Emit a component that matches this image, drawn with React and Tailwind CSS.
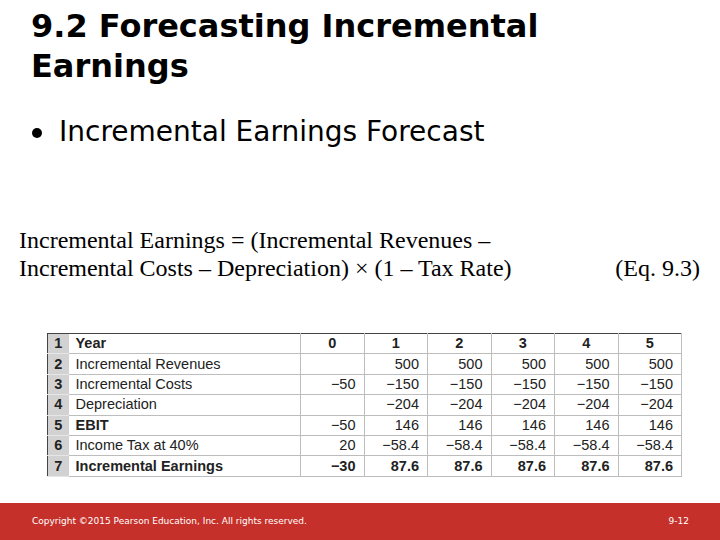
import React from 'react';

const rows = [
  { n: 1, label: 'Year', vals: ['0', '1', '2', '3', '4', '5'], bold: true },
  { n: 2, label: 'Incremental Revenues', vals: ['', '500', '500', '500', '500', '500'] },
  { n: 3, label: 'Incremental Costs', vals: ['\u221250', '\u2212150', '\u2212150', '\u2212150', '\u2212150', '\u2212150'] },
  { n: 4, label: 'Depreciation', vals: ['', '\u2212204', '\u2212204', '\u2212204', '\u2212204', '\u2212204'] },
  { n: 5, label: 'EBIT', vals: ['\u221250', '146', '146', '146', '146', '146'], boldLabel: true },
  { n: 6, label: 'Income Tax at 40%', vals: ['20', '\u221258.4', '\u221258.4', '\u221258.4', '\u221258.4', '\u221258.4'] },
  { n: 7, label: 'Incremental Earnings', vals: ['\u221230', '87.6', '87.6', '87.6', '87.6', '87.6'], bold: true },
];

export default function App() {
  return (
    <div className="w-[720px] h-[540px] bg-white flex flex-col overflow-hidden">
      <div className="flex-1 flex flex-col">
        <h1 className="pl-[31px] pt-[6px] text-[32px] leading-[40px] font-bold text-black font-['DejaVu_Sans',sans-serif]">
          9.2 Forecasting Incremental
          <br />
          Earnings
        </h1>
        <div className="pl-[32px] mt-[29px] flex items-center h-[34px] text-[28px] leading-[34px] text-black font-['DejaVu_Sans',sans-serif]">
          <span className="w-[10px] h-[10px] rounded-full bg-black mr-[17px] mt-[2px]" />
          <span>Incremental Earnings Forecast</span>
        </div>

        <div className="mt-[77px] pl-[19px] pr-[20px] flex items-end justify-between font-['Liberation_Serif',serif] text-[24px] leading-[28px] text-black">
          <div>
            <div>Incremental Earnings = (Incremental Revenues –</div>
            <div>Incremental Costs – Depreciation) × (1 – Tax Rate)</div>
          </div>
          <div>(Eq. 9.3)</div>
        </div>

        <div className="mt-[51px] pl-[47px]">
          <table className="border-collapse border border-[#444] font-['Liberation_Sans',Arial,sans-serif] text-[14.5px] text-[#222]">
            <tbody>
              {rows.map((r) => (
                <tr key={r.n} className="h-[20.4px]">
                  <td className="w-[21px] bg-[#d2d2d2] text-center font-bold border-b border-[#e6e6e6] p-0 leading-[19px]">{r.n}</td>
                  <td className={`w-[232px] pl-[7px] border-r border-b border-[#bdbdbd] p-0 leading-[19px] ${r.bold || r.boldLabel ? 'font-bold' : ''}`}>{r.label}</td>
                  {r.vals.map((v, i) => (
                    <td
                      key={i}
                      className={`w-[63.5px] border-r border-b border-[#bdbdbd] p-0 leading-[19px] ${r.n === 1 ? 'text-center' : 'text-right pr-[8px]'} ${r.bold ? 'font-bold' : ''}`}
                    >
                      {v}
                    </td>
                  ))}
                </tr>
              ))}
            </tbody>
          </table>
        </div>
      </div>

      <div className="h-[37px] bg-[#c5312a] flex items-center justify-between pl-[32px] pr-[31px] text-white text-[9px] font-['DejaVu_Sans',sans-serif]">
        <span>Copyright ©2015 Pearson Education, Inc. All rights reserved.</span>
        <span>9-12</span>
      </div>
    </div>
  );
}
